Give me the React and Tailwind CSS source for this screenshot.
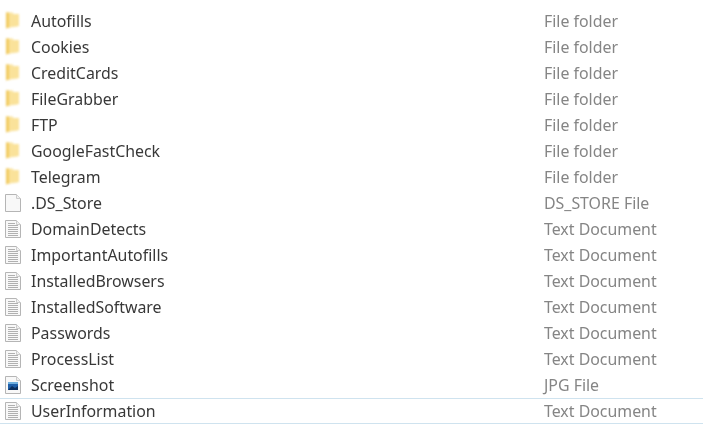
import React from "react";

const rows = [
  { name: "Autofills", type: "File folder", icon: "folder" },
  { name: "Cookies", type: "File folder", icon: "folder" },
  { name: "CreditCards", type: "File folder", icon: "folder" },
  { name: "FileGrabber", type: "File folder", icon: "folder" },
  { name: "FTP", type: "File folder", icon: "folder" },
  { name: "GoogleFastCheck", type: "File folder", icon: "folder" },
  { name: "Telegram", type: "File folder", icon: "folder" },
  { name: ".DS_Store", type: "DS_STORE File", icon: "blank" },
  { name: "DomainDetects", type: "Text Document", icon: "text" },
  { name: "ImportantAutofills", type: "Text Document", icon: "text" },
  { name: "InstalledBrowsers", type: "Text Document", icon: "text" },
  { name: "InstalledSoftware", type: "Text Document", icon: "text" },
  { name: "Passwords", type: "Text Document", icon: "text" },
  { name: "ProcessList", type: "Text Document", icon: "text" },
  { name: "Screenshot", type: "JPG File", icon: "image" },
  { name: "UserInformation", type: "Text Document", icon: "text", selected: true },
];

const FolderIcon = () => (
  <svg width="18" height="20" viewBox="0 0 18 20" className="blur-[0.8px]">
    <path d="M2 1.5 L9 1.5 L9 3 L15 3 L15 15 L2 17 Z" fill="#fae39f" />
    <path d="M2 1.5 L5 1.5 L5 16.5 L2 17.5 Z" fill="#f2cb60" />
    <path d="M5 3 L15 3 L15 15 L5 16.5 Z" fill="#fae29a" />
  </svg>
);

const PageIcon = ({ children }) => (
  <svg width="18" height="20" viewBox="0 0 18 20" className="blur-[0.4px]">
    <path
      d="M1.5 1.5 L12.5 1.5 L16.5 5.5 L16.5 18.5 L1.5 18.5 Z"
      fill="#f8f8f8"
      stroke="#b5b5b5"
    />
    <path d="M12.5 1.5 L12.5 5.5 L16.5 5.5" fill="#f0f0f0" stroke="#cccccc" />
    {children}
  </svg>
);

const TextLines = () => (
  <g stroke="#b0b0b0" strokeWidth="1">
    {[4.5, 6.5, 8.5, 10.5, 12.5, 14.5, 16.5].map((y) => (
      <path key={y} d={`M4 ${y} L${y < 6 ? 11 : 14} ${y}`} />
    ))}
  </g>
);

const FileIcon = ({ icon }) => {
  if (icon === "folder") return <FolderIcon />;
  if (icon === "blank") return <PageIcon />;
  if (icon === "image")
    return (
      <PageIcon>
        <rect x="4" y="7" width="10" height="8" fill="#1f5fa8" />
        <path d="M4 15 L8 11 L11 13 L14 11 L14 15 Z" fill="#0c2f5e" />
        <rect x="4" y="7" width="10" height="2" fill="#6fb0e0" />
      </PageIcon>
    );
  return (
    <PageIcon>
      <TextLines />
    </PageIcon>
  );
};

export default function App() {
  return (
    <div className="w-[703px] h-[445px] bg-white overflow-hidden pt-2 font-['Noto_Sans','Open_Sans',sans-serif] text-[15.9px]">
      {rows.map((row) => (
        <div
          key={row.name}
          className={`h-[26px] flex items-center ${
            row.selected ? "border-y border-[#cfe3ef]" : ""
          }`}
        >
          <div className="w-[31px] pl-[4px] flex items-center">
            <FileIcon icon={row.icon} />
          </div>
          <span className="w-[513px] pt-[2px] text-[#383838] whitespace-nowrap blur-[0.3px]">{row.name}</span>
          <span className="pt-[2px] text-[#858585] whitespace-nowrap blur-[0.3px]">{row.type}</span>
        </div>
      ))}
    </div>
  );
}
